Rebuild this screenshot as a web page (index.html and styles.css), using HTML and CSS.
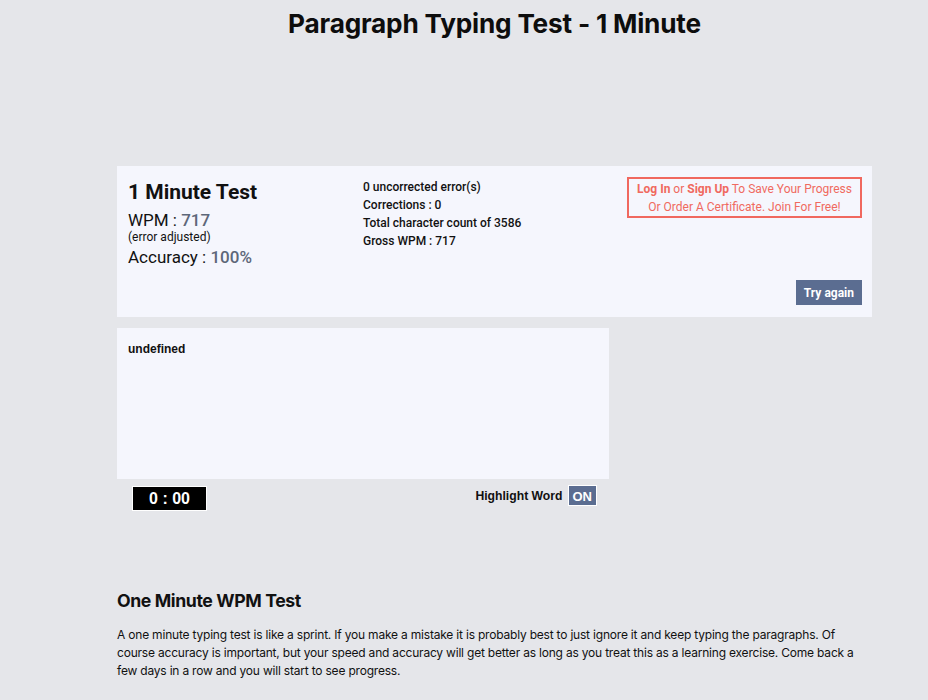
FILE: index.html
```html
<!DOCTYPE html>
<html>
<head>
<meta charset="utf-8">
<link rel="stylesheet" href="styles.css">
</head>
<body>
<h1 class="page-title">Paragraph Typing Test - 1 Minute</h1>
<main class="content">
  <section class="results">
    <div class="res-main">
      <h2 class="res-title">1 Minute Test</h2>
      <div class="stat wpm">WPM : <span class="val">717</span></div>
      <div class="note">(error adjusted)</div>
      <div class="stat acc">Accuracy : <span class="val">100%</span></div>
    </div>
    <div class="res-detail">
      <div>0 uncorrected error(s)</div>
      <div>Corrections : 0</div>
      <div>Total character count of 3586</div>
      <div>Gross WPM : 717</div>
    </div>
    <div class="res-side">
      <div class="promo"><b>Log In</b> or <b>Sign Up</b> To Save Your Progress<br>Or Order A Certificate. Join For Free!</div>
      <button class="btn">Try again</button>
    </div>
  </section>
  <section class="typing">
    <div class="text-box">undefined</div>
    <div class="controls">
      <div class="timer">0 : 00</div>
      <div class="highlight">Highlight Word <span class="toggle">ON</span></div>
    </div>
  </section>
  <section class="info">
    <h2 class="info-title">One Minute WPM Test</h2>
    <p class="info-text">A one minute typing test is like a sprint. If you make a mistake it is probably best to just ignore it and keep typing the paragraphs. Of course accuracy is important, but your speed and accuracy will get better as long as you treat this as a learning exercise. Come back a few days in a row and you will start to see progress.</p>
  </section>
</main>
</body>
</html>
```
FILE: styles.css
```css
* { box-sizing: border-box; }
body {
  margin: 0;
  background: #e5e6ea;
  font-family: Roboto, "Liberation Sans", sans-serif;
  color: #111;
}
.page-title {
  margin: 0;
  padding-top: 8px;
  padding-left: 61px;
  text-align: center;
  font-family: Inter, sans-serif;
  font-weight: 700;
  font-size: 26.2px;
  line-height: 32px;
  color: #0d0d0d;
  letter-spacing: -0.2px;
}
.content {
  margin-left: 117px;
  width: 755px;
  padding-top: 126px;
}
.results {
  background: #f5f6fd;
  height: 151px;
  display: flex;
  padding: 11px 11px 12px 11px;
}
.res-main { width: 235px; }
.res-title {
  margin: 0;
  font-size: 21px;
  line-height: 30px;
  font-weight: 700;
}
.stat {
  font-size: 17px;
  line-height: 20px;
  margin-top: 5px;
}
.stat.wpm { line-height: 17px; margin-top: 5px; }
.stat.acc { margin-top: 4px; }
.val { color: #5d6779; font-weight: 500; }
.note { font-size: 12px; line-height: 12px; margin-top: 2px; }
.res-detail {
  width: 264px;
  font-size: 12px;
  font-weight: 500;
  line-height: 18px;
  padding-top: 1px;
}
.res-side {
  flex: 1;
  display: flex;
  flex-direction: column;
  align-items: flex-end;
  justify-content: space-between;
}
.promo {
  border: 2px solid #f0685f;
  color: #f06a5f;
  font-size: 12px;
  line-height: 18px;
  text-align: center;
  padding: 1px 7px 0;
  width: 235px;
  margin-right: -1px;
}
.promo b { font-weight: 700; }
.btn {
  border: none;
  background: #5b6d91;
  color: #fff;
  font-family: Roboto, sans-serif;
  font-weight: 700;
  font-size: 12px;
  height: 25px;
  padding: 0 8px;
  margin-right: -1px;
}
.typing {
  width: 492px;
  margin-top: 11px;
}
.text-box {
  background: #f5f6fd;
  height: 151px;
  padding: 14px 11px;
  font-family: "Liberation Sans", Arial, sans-serif;
  font-weight: 700;
  font-size: 12px;
  line-height: 14px;
}
.controls {
  display: flex;
  justify-content: space-between;
  align-items: center;
  padding: 7px 12px 0 15px;
}
.timer {
  background: #000;
  color: #fff;
  border: 1px solid #fff;
  width: 75px;
  height: 25px;
  text-align: center;
  font-family: "Liberation Sans", Arial, sans-serif;
  font-weight: 700;
  font-size: 16px;
  line-height: 23px;
}
.highlight {
  font-family: "Liberation Sans", Arial, sans-serif;
  font-weight: 700;
  font-size: 12.2px;
  display: flex;
  align-items: center;
  gap: 5px;
  margin-top: -6px;
}
.toggle {
  background: #5b6d91;
  color: #fff;
  padding: 0 4px;
  height: 21px;
  line-height: 21px;
  font-size: 13px;
  border: 1px solid #fff;
}
.info { margin-top: 77px; width: 745px; }
.info-title {
  margin: 0;
  font-family: Inter, sans-serif;
  font-weight: 700;
  font-size: 17.7px;
  line-height: 26px;
  letter-spacing: -0.4px;
}
.info-text {
  margin: 12px 0 0;
  font-family: Inter, sans-serif;
  font-size: 12px;
  line-height: 18px;
  letter-spacing: -0.2px;
}
```
